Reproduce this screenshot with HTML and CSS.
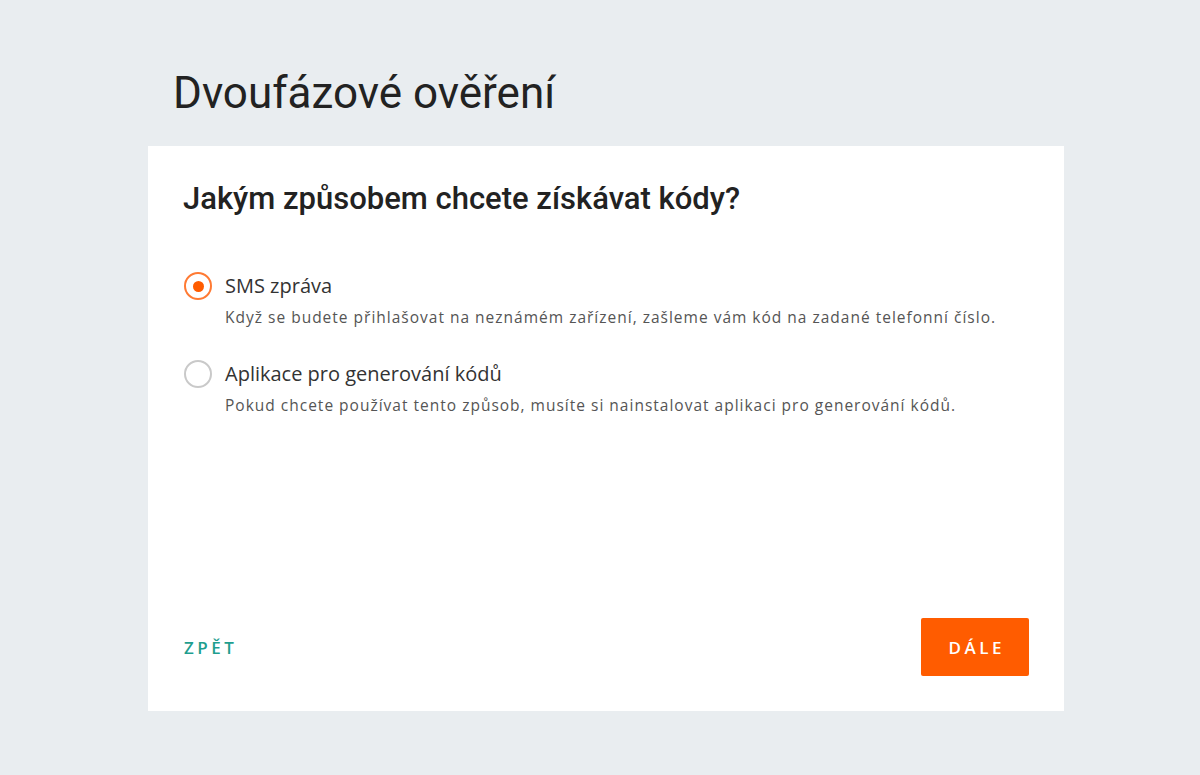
FILE: index.html
```html
<!DOCTYPE html>
<html lang="cs">
<head>
<meta charset="utf-8">
<title>Dvoufázové ověření</title>
<link rel="stylesheet" href="styles.css">
</head>
<body>
<main class="page">
  <h1 class="page-title">Dvoufázové ověření</h1>
  <section class="card">
    <h2 class="card-title">Jakým způsobem chcete získávat kódy?</h2>
    <div class="options">
      <label class="option">
        <span class="radio checked"><span class="dot"></span></span>
        <span class="option-text">
          <span class="option-label">SMS zpráva</span>
          <span class="option-desc">Když se budete přihlašovat na neznámém zařízení, zašleme vám kód na zadané telefonní číslo.</span>
        </span>
      </label>
      <label class="option">
        <span class="radio"></span>
        <span class="option-text">
          <span class="option-label">Aplikace pro generování kódů</span>
          <span class="option-desc">Pokud chcete používat tento způsob, musíte si nainstalovat aplikaci pro generování kódů.</span>
        </span>
      </label>
    </div>
    <div class="actions">
      <button class="btn-back" type="button">ZPĚT</button>
      <button class="btn-next" type="button">DÁLE</button>
    </div>
  </section>
</main>
</body>
</html>
```
FILE: styles.css
```css
* { box-sizing: border-box; }
html, body { margin: 0; padding: 0; }
body {
  background: #e9edf0;
  font-family: "Open Sans", "Liberation Sans", sans-serif;
  color: #2b2b2b;
  width: 1200px;
  height: 775px;
  overflow: hidden;
}
.page {
  width: 916px;
  margin-left: 148px;
  padding-top: 65px;
}
.page-title {
  font-family: Roboto, "Liberation Sans", sans-serif;
  font-weight: 400;
  font-size: 44px;
  line-height: 56px;
  margin: 0 0 25px 25px;
  color: #222;
}
.card {
  background: #fff;
  height: 565px;
  padding: 33px 35px 35px 35px;
  display: flex;
  flex-direction: column;
}
.card-title {
  font-family: Roboto, "Liberation Sans", sans-serif;
  font-weight: 500;
  font-size: 31px;
  line-height: 40px;
  margin: 0;
  color: #222;
}
.options {
  margin-top: 53px;
  display: flex;
  flex-direction: column;
  gap: 32px;
}
.option {
  display: flex;
  align-items: flex-start;
  gap: 13px;
  padding-left: 1px;
}
.radio {
  width: 28px;
  height: 28px;
  border-radius: 50%;
  border: 2px solid #c9c9c9;
  display: flex;
  align-items: center;
  justify-content: center;
  flex: none;
}
.radio.checked { border-color: #ff7a33; }
.dot {
  width: 11px;
  height: 11px;
  border-radius: 50%;
  background: #ff5c00;
}
.option-text {
  display: flex;
  flex-direction: column;
}
.option-label {
  font-size: 20px;
  line-height: 28px;
  color: #333;
}
.option-desc {
  font-size: 15.5px;
  letter-spacing: 1px;
  line-height: 22px;
  margin-top: 6px;
  color: #555;
}
.actions {
  margin-top: auto;
  display: flex;
  justify-content: space-between;
  align-items: center;
}
.btn-back {
  background: none;
  border: 0;
  padding: 0 0 0 1px;
  font-family: "Open Sans", "Liberation Sans", sans-serif;
  font-weight: 600;
  font-size: 17px;
  letter-spacing: 3.5px;
  color: #1f9e8f;
}
.btn-next {
  background: #ff5c00;
  border: 0;
  border-radius: 2px;
  width: 108px;
  height: 58px;
  padding: 0 0 0 3.5px;
  color: #fff;
  font-family: "Open Sans", "Liberation Sans", sans-serif;
  font-weight: 600;
  font-size: 17px;
  letter-spacing: 3.5px;
}
```
